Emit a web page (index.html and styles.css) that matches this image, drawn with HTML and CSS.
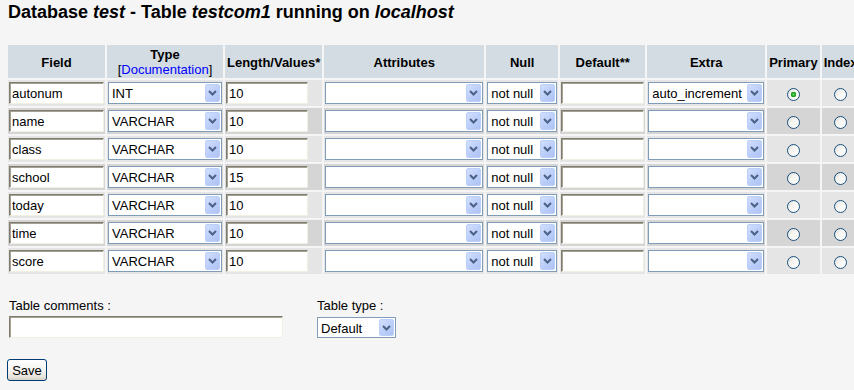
FILE: index.html
```html
<!DOCTYPE html>
<html>
<head>
<meta charset="utf-8">
<title>phpMyAdmin</title>
<link rel="stylesheet" href="styles.css">
</head>
<body>
<h2 class="title">Database <i>test</i> - Table <i>testcom1</i> running on <i>localhost</i></h2>
<form class="form">
<table class="fields">
<tr>
<th>Field</th>
<th>Type<br><span class="bracket">[<a class="doc" href="#">Documentation</a>]</span></th>
<th>Length/Values*</th>
<th>Attributes</th>
<th>Null</th>
<th>Default**</th>
<th>Extra</th>
<th>Primary</th>
<th>Index</th>
</tr>
<tr class="odd">
<td><input class="txt w-field" type="text" value="autonum"></td>
<td><span class="sel w-type"><select><option>INT</option></select><span class="arr"><svg width="9" height="6" viewBox="0 0 9 6"><path d="M1 1 L4.5 4.5 L8 1" fill="none" stroke="#4d6185" stroke-width="2"/></svg></span></span></td>
<td class="left"><input class="txt w-len" type="text" value="10"></td>
<td><span class="sel w-attr"><select><option></option></select><span class="arr"><svg width="9" height="6" viewBox="0 0 9 6"><path d="M1 1 L4.5 4.5 L8 1" fill="none" stroke="#4d6185" stroke-width="2"/></svg></span></span></td>
<td><span class="sel w-null"><select><option>not null</option></select><span class="arr"><svg width="9" height="6" viewBox="0 0 9 6"><path d="M1 1 L4.5 4.5 L8 1" fill="none" stroke="#4d6185" stroke-width="2"/></svg></span></span></td>
<td><input class="txt w-def" type="text" value=""></td>
<td><span class="sel w-extra"><select><option>auto_increment</option></select><span class="arr"><svg width="9" height="6" viewBox="0 0 9 6"><path d="M1 1 L4.5 4.5 L8 1" fill="none" stroke="#4d6185" stroke-width="2"/></svg></span></span></td>
<td class="center"><input class="radio" type="radio" name="k1" checked></td>
<td class="center"><input class="radio" type="radio" name="k1"></td>
</tr>
<tr class="even">
<td><input class="txt w-field" type="text" value="name"></td>
<td><span class="sel w-type"><select><option>VARCHAR</option></select><span class="arr"><svg width="9" height="6" viewBox="0 0 9 6"><path d="M1 1 L4.5 4.5 L8 1" fill="none" stroke="#4d6185" stroke-width="2"/></svg></span></span></td>
<td class="left"><input class="txt w-len" type="text" value="10"></td>
<td><span class="sel w-attr"><select><option></option></select><span class="arr"><svg width="9" height="6" viewBox="0 0 9 6"><path d="M1 1 L4.5 4.5 L8 1" fill="none" stroke="#4d6185" stroke-width="2"/></svg></span></span></td>
<td><span class="sel w-null"><select><option>not null</option></select><span class="arr"><svg width="9" height="6" viewBox="0 0 9 6"><path d="M1 1 L4.5 4.5 L8 1" fill="none" stroke="#4d6185" stroke-width="2"/></svg></span></span></td>
<td><input class="txt w-def" type="text" value=""></td>
<td><span class="sel w-extra"><select><option></option></select><span class="arr"><svg width="9" height="6" viewBox="0 0 9 6"><path d="M1 1 L4.5 4.5 L8 1" fill="none" stroke="#4d6185" stroke-width="2"/></svg></span></span></td>
<td class="center"><input class="radio" type="radio" name="k2"></td>
<td class="center"><input class="radio" type="radio" name="k2"></td>
</tr>
<tr class="odd">
<td><input class="txt w-field" type="text" value="class"></td>
<td><span class="sel w-type"><select><option>VARCHAR</option></select><span class="arr"><svg width="9" height="6" viewBox="0 0 9 6"><path d="M1 1 L4.5 4.5 L8 1" fill="none" stroke="#4d6185" stroke-width="2"/></svg></span></span></td>
<td class="left"><input class="txt w-len" type="text" value="10"></td>
<td><span class="sel w-attr"><select><option></option></select><span class="arr"><svg width="9" height="6" viewBox="0 0 9 6"><path d="M1 1 L4.5 4.5 L8 1" fill="none" stroke="#4d6185" stroke-width="2"/></svg></span></span></td>
<td><span class="sel w-null"><select><option>not null</option></select><span class="arr"><svg width="9" height="6" viewBox="0 0 9 6"><path d="M1 1 L4.5 4.5 L8 1" fill="none" stroke="#4d6185" stroke-width="2"/></svg></span></span></td>
<td><input class="txt w-def" type="text" value=""></td>
<td><span class="sel w-extra"><select><option></option></select><span class="arr"><svg width="9" height="6" viewBox="0 0 9 6"><path d="M1 1 L4.5 4.5 L8 1" fill="none" stroke="#4d6185" stroke-width="2"/></svg></span></span></td>
<td class="center"><input class="radio" type="radio" name="k3"></td>
<td class="center"><input class="radio" type="radio" name="k3"></td>
</tr>
<tr class="even">
<td><input class="txt w-field" type="text" value="school"></td>
<td><span class="sel w-type"><select><option>VARCHAR</option></select><span class="arr"><svg width="9" height="6" viewBox="0 0 9 6"><path d="M1 1 L4.5 4.5 L8 1" fill="none" stroke="#4d6185" stroke-width="2"/></svg></span></span></td>
<td class="left"><input class="txt w-len" type="text" value="15"></td>
<td><span class="sel w-attr"><select><option></option></select><span class="arr"><svg width="9" height="6" viewBox="0 0 9 6"><path d="M1 1 L4.5 4.5 L8 1" fill="none" stroke="#4d6185" stroke-width="2"/></svg></span></span></td>
<td><span class="sel w-null"><select><option>not null</option></select><span class="arr"><svg width="9" height="6" viewBox="0 0 9 6"><path d="M1 1 L4.5 4.5 L8 1" fill="none" stroke="#4d6185" stroke-width="2"/></svg></span></span></td>
<td><input class="txt w-def" type="text" value=""></td>
<td><span class="sel w-extra"><select><option></option></select><span class="arr"><svg width="9" height="6" viewBox="0 0 9 6"><path d="M1 1 L4.5 4.5 L8 1" fill="none" stroke="#4d6185" stroke-width="2"/></svg></span></span></td>
<td class="center"><input class="radio" type="radio" name="k4"></td>
<td class="center"><input class="radio" type="radio" name="k4"></td>
</tr>
<tr class="odd">
<td><input class="txt w-field" type="text" value="today"></td>
<td><span class="sel w-type"><select><option>VARCHAR</option></select><span class="arr"><svg width="9" height="6" viewBox="0 0 9 6"><path d="M1 1 L4.5 4.5 L8 1" fill="none" stroke="#4d6185" stroke-width="2"/></svg></span></span></td>
<td class="left"><input class="txt w-len" type="text" value="10"></td>
<td><span class="sel w-attr"><select><option></option></select><span class="arr"><svg width="9" height="6" viewBox="0 0 9 6"><path d="M1 1 L4.5 4.5 L8 1" fill="none" stroke="#4d6185" stroke-width="2"/></svg></span></span></td>
<td><span class="sel w-null"><select><option>not null</option></select><span class="arr"><svg width="9" height="6" viewBox="0 0 9 6"><path d="M1 1 L4.5 4.5 L8 1" fill="none" stroke="#4d6185" stroke-width="2"/></svg></span></span></td>
<td><input class="txt w-def" type="text" value=""></td>
<td><span class="sel w-extra"><select><option></option></select><span class="arr"><svg width="9" height="6" viewBox="0 0 9 6"><path d="M1 1 L4.5 4.5 L8 1" fill="none" stroke="#4d6185" stroke-width="2"/></svg></span></span></td>
<td class="center"><input class="radio" type="radio" name="k5"></td>
<td class="center"><input class="radio" type="radio" name="k5"></td>
</tr>
<tr class="even">
<td><input class="txt w-field" type="text" value="time"></td>
<td><span class="sel w-type"><select><option>VARCHAR</option></select><span class="arr"><svg width="9" height="6" viewBox="0 0 9 6"><path d="M1 1 L4.5 4.5 L8 1" fill="none" stroke="#4d6185" stroke-width="2"/></svg></span></span></td>
<td class="left"><input class="txt w-len" type="text" value="10"></td>
<td><span class="sel w-attr"><select><option></option></select><span class="arr"><svg width="9" height="6" viewBox="0 0 9 6"><path d="M1 1 L4.5 4.5 L8 1" fill="none" stroke="#4d6185" stroke-width="2"/></svg></span></span></td>
<td><span class="sel w-null"><select><option>not null</option></select><span class="arr"><svg width="9" height="6" viewBox="0 0 9 6"><path d="M1 1 L4.5 4.5 L8 1" fill="none" stroke="#4d6185" stroke-width="2"/></svg></span></span></td>
<td><input class="txt w-def" type="text" value=""></td>
<td><span class="sel w-extra"><select><option></option></select><span class="arr"><svg width="9" height="6" viewBox="0 0 9 6"><path d="M1 1 L4.5 4.5 L8 1" fill="none" stroke="#4d6185" stroke-width="2"/></svg></span></span></td>
<td class="center"><input class="radio" type="radio" name="k6"></td>
<td class="center"><input class="radio" type="radio" name="k6"></td>
</tr>
<tr class="odd">
<td><input class="txt w-field" type="text" value="score"></td>
<td><span class="sel w-type"><select><option>VARCHAR</option></select><span class="arr"><svg width="9" height="6" viewBox="0 0 9 6"><path d="M1 1 L4.5 4.5 L8 1" fill="none" stroke="#4d6185" stroke-width="2"/></svg></span></span></td>
<td class="left"><input class="txt w-len" type="text" value="10"></td>
<td><span class="sel w-attr"><select><option></option></select><span class="arr"><svg width="9" height="6" viewBox="0 0 9 6"><path d="M1 1 L4.5 4.5 L8 1" fill="none" stroke="#4d6185" stroke-width="2"/></svg></span></span></td>
<td><span class="sel w-null"><select><option>not null</option></select><span class="arr"><svg width="9" height="6" viewBox="0 0 9 6"><path d="M1 1 L4.5 4.5 L8 1" fill="none" stroke="#4d6185" stroke-width="2"/></svg></span></span></td>
<td><input class="txt w-def" type="text" value=""></td>
<td><span class="sel w-extra"><select><option></option></select><span class="arr"><svg width="9" height="6" viewBox="0 0 9 6"><path d="M1 1 L4.5 4.5 L8 1" fill="none" stroke="#4d6185" stroke-width="2"/></svg></span></span></td>
<td class="center"><input class="radio" type="radio" name="k7"></td>
<td class="center"><input class="radio" type="radio" name="k7"></td>
</tr>
</table>

<div class="options">
  <div class="opt">
    <div class="lbl">Table comments :</div>
    <input class="txt w-comment" type="text" value="">
  </div>
  <div class="opt opt-type">
    <div class="lbl">Table type :</div>
    <span class="sel w-ttype"><select><option>Default</option></select><span class="arr"><svg width="9" height="6" viewBox="0 0 9 6"><path d="M1 1 L4.5 4.5 L8 1" fill="none" stroke="#4d6185" stroke-width="2"/></svg></span></span>
  </div>
</div>

<div class="actions">
  <button class="btn" type="button">Save</button>
</div>
</form>
</body>
</html>
```

FILE: styles.css
```css
html, body {
  overflow: hidden;
}
body {
  margin: 0;
  padding: 2px 8px 0;
  background: #f5f5f5;
  font-family: "Liberation Sans", Arial, sans-serif;
  font-size: 13px;
  color: #000;
}
.title {
  margin: 0 0 20px;
  font-size: 18px;
  line-height: 21px;
  font-weight: bold;
  white-space: nowrap;
}
.form {
  margin: 0;
}
.fields {
  border-collapse: separate;
  border-spacing: 2px;
  margin: 0 -2px;
  white-space: nowrap;
}
.fields th {
  background: #d3dce3;
  font-weight: bold;
  font-size: 13px;
  line-height: 15px;
  padding: 2px 2px 1px;
  height: 30px;
  text-align: center;
  vertical-align: middle;
}
.bracket {
  font-weight: normal;
}
.doc {
  color: #0000ff;
  text-decoration: none;
}
.fields td {
  padding: 2px 1px;
  height: 22px;
  vertical-align: middle;
}
.odd td { background: #e5e5e5; }
.even td { background: #d5d5d5; }
.left { text-align: left; }
.center { text-align: center; }

.txt {
  box-sizing: border-box;
  height: 22px;
  margin: 0;
  padding: 1px 2px 0;
  font-family: "Liberation Sans", Arial, sans-serif;
  font-size: 13px;
  color: #000;
  background: #fff;
  border: 1px solid;
  border-color: #7f7b6e #f1efe2 #f1efe2 #7f7b6e;
  box-shadow: inset 1px 1px 0 #a6a293;
  outline: none;
  vertical-align: middle;
}
.w-field { width: 95px; }
.w-len { width: 82px; }
.w-def { width: 83px; }
.w-comment { width: 274px; margin-left: 1px; }

.sel {
  position: relative;
  display: inline-block;
  vertical-align: middle;
  height: 22px;
}
.sel select {
  -webkit-appearance: none;
  appearance: none;
  box-sizing: border-box;
  width: 100%;
  height: 22px;
  margin: 0;
  padding: 1px 18px 0 3px;
  border: 1px solid #7f9db9;
  border-radius: 0;
  background: #fff;
  font-family: "Liberation Sans", Arial, sans-serif;
  font-size: 13px;
  color: #000;
  outline: none;
}
.arr {
  position: absolute;
  top: 2px;
  right: 2px;
  bottom: 2px;
  width: 15px;
  box-sizing: border-box;
  border: 1px solid #bccefa;
  border-radius: 2px;
  background: linear-gradient(135deg, #d2defd 0%, #b9cdf9 60%, #aec3f5 100%);
  display: flex;
  align-items: center;
  justify-content: center;
  pointer-events: none;
}
.arr svg { display: block; }
.w-type { width: 114px; }
.w-attr { width: 158px; }
.w-null { width: 70px; }
.w-extra { width: 116px; }
.w-ttype { width: 79px; height: 21px; margin-left: 1px; }
.w-ttype select { height: 21px; }

.radio {
  -webkit-appearance: none;
  appearance: none;
  width: 13px;
  height: 13px;
  margin: 0;
  border: 1px solid #1c5180;
  border-radius: 50%;
  background: linear-gradient(135deg, #dcdcd7 0%, #f5f5f2 40%, #ffffff 100%);
  vertical-align: middle;
}
.radio:checked {
  background: radial-gradient(circle, #5fd35b 0, #21a121 2px, #1e9a1e 2.6px, rgba(0,0,0,0) 3px),
              linear-gradient(135deg, #dcdcd7 0%, #f5f5f2 40%, #ffffff 100%);
}

.options {
  display: flex;
  gap: 33px;
  margin-top: 22px;
}
.opt {
  display: flex;
  flex-direction: column;
  align-items: flex-start;
  gap: 3px;
}
.opt-type {
  gap: 4px;
}
.lbl {
  line-height: 15px;
  padding-left: 1px;
}
.actions {
  margin-top: 21px;
}
.btn {
  box-sizing: border-box;
  width: 40px;
  height: 22px;
  margin: 0 0 0 -1px;
  padding: 0;
  font-family: "Liberation Sans", Arial, sans-serif;
  font-size: 13px;
  color: #000;
  border: 1px solid #003c74;
  border-radius: 3px;
  background: linear-gradient(#ffffff 0%, #f4f3ee 50%, #e6e3da 85%, #d6d0c5 100%);
}
```
